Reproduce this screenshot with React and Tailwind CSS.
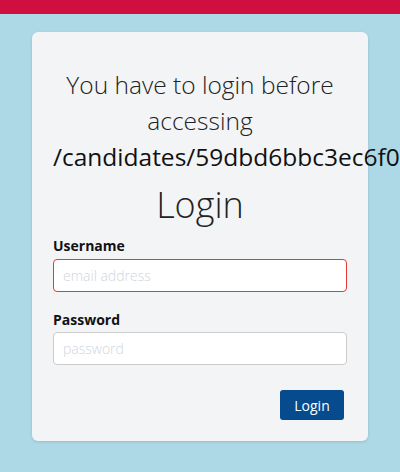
import React from 'react';

const App = () => {
  return (
    <div className="min-h-[472px] bg-[#add8e6]" style={{ fontFamily: '"Open Sans", sans-serif' }}>
      <div className="h-[14px] bg-[#cf0f40]" />
      <div className="px-8 pt-[18px]">
        <div className="bg-[#f3f4f6] rounded-md shadow-[0_1px_3px_rgba(0,0,0,0.12)] px-[21px] pt-[35px] pb-[21px]">
          <h2 className="text-center text-[24.5px] leading-[36px] font-light text-[#222]">
            You have to login before accessing{' '}
            <span className="font-normal text-[#111]">/candidates/59dbd6bbc3ec6f0</span>
          </h2>
          <h1 className="text-center text-[36px] leading-[48px] font-light text-[#222] mt-[6px]">Login</h1>
          <form className="mt-[7px]">
            <label className="block text-[14px] leading-[20px] font-bold text-[#111]">Username</label>
            <input
              type="text"
              placeholder="email address"
              className="mt-[3px] w-full h-[33px] px-[9px] bg-white border border-[#e53935] rounded-[4px] text-[14px] font-light placeholder:text-[#cfd6e0] outline-none"
            />
            <label className="block mt-[18px] text-[14px] leading-[20px] font-bold text-[#111]">Password</label>
            <input
              type="password"
              placeholder="password"
              className="mt-[2px] w-full h-[33px] px-[9px] bg-white border border-[#cccccc] rounded-[4px] text-[14px] font-light placeholder:text-[#cfd6e0] outline-none"
            />
            <div className="flex justify-end mt-[25px] pr-[3px]">
              <button
                type="button"
                className="h-[30px] w-[64px] bg-[#054b8e] text-white text-[14px] rounded-[3px]"
              >
                Login
              </button>
            </div>
          </form>
        </div>
      </div>
    </div>
  );
};

export default App;
